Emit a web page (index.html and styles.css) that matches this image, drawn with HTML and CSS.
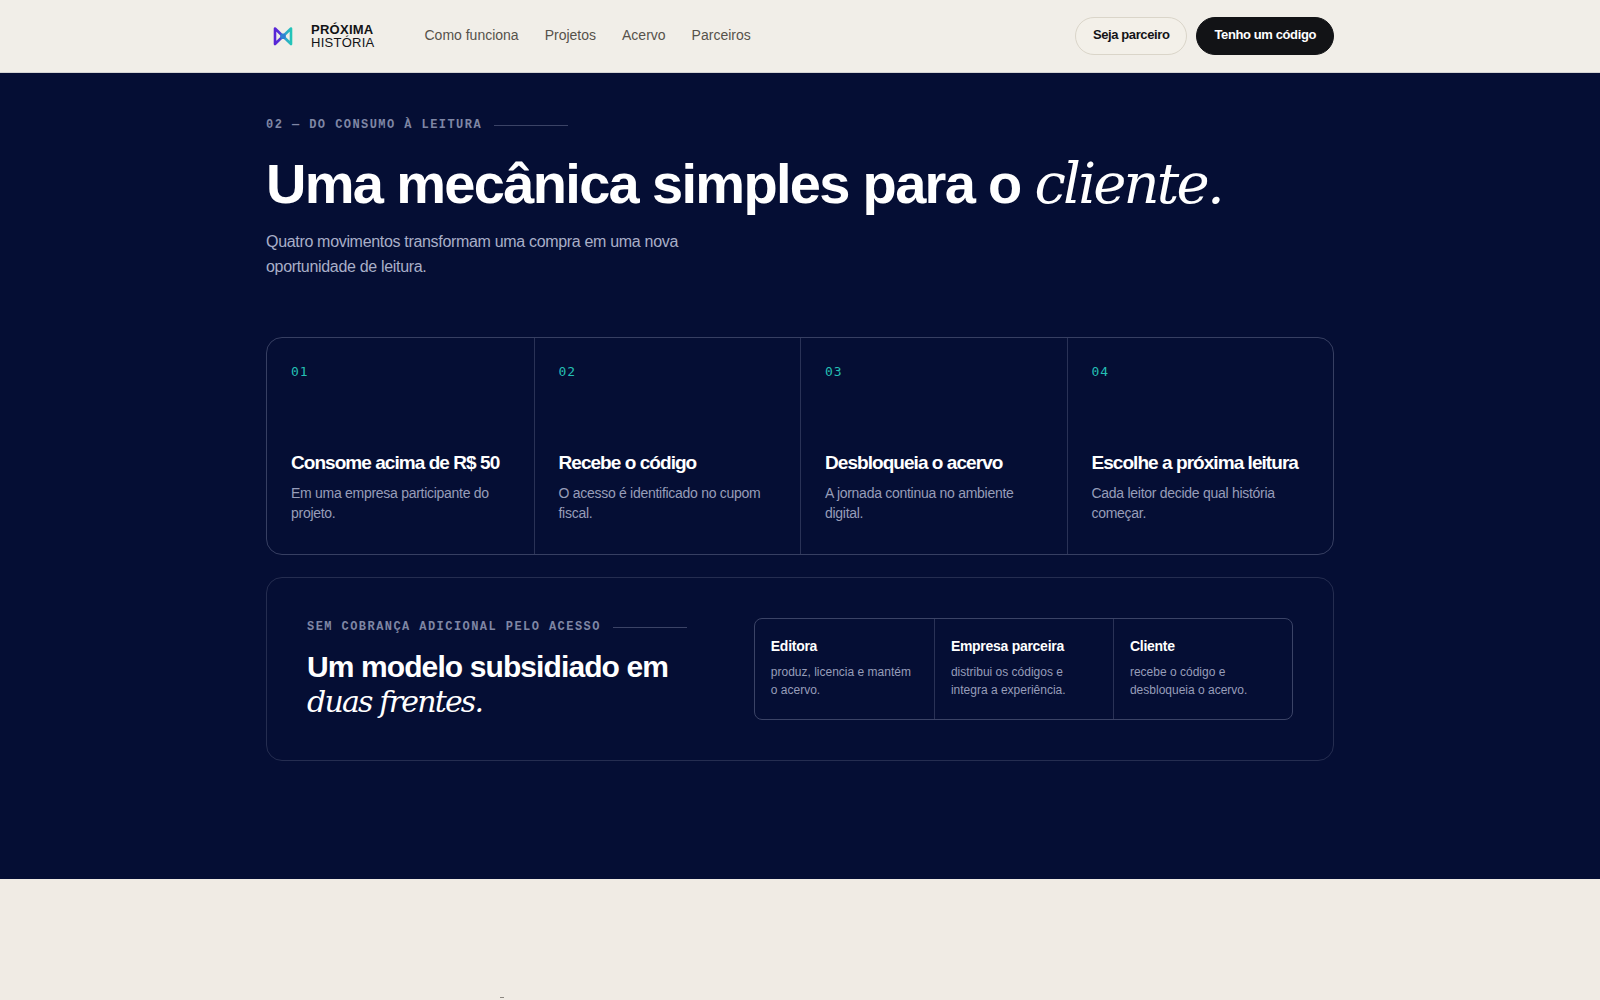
FILE: index.html
```html
<!DOCTYPE html>
<html lang="pt-BR">
<head>
    <meta charset="UTF-8">
    <meta name="viewport" content="width=device-width, initial-scale=1.0">
    <title>Próxima História</title>
    <link rel="stylesheet" href="styles.css">
</head>
<body>
    <header class="header">
        <div class="container header-inner">
            <a class="logo" href="#">
                <svg class="logo-mark" viewBox="0 0 34 34" aria-hidden="true">
                    <defs>
                        <linearGradient id="wing" gradientUnits="userSpaceOnUse" x1="8" x2="26" y1="0" y2="0">
                            <stop offset="0" stop-color="#5a22d6"/>
                            <stop offset="0.3" stop-color="#5530d8"/>
                            <stop offset="0.6" stop-color="#2fa0cc"/>
                            <stop offset="1" stop-color="#22c9b6"/>
                        </linearGradient>
                    </defs>
                    <path d="M9 9.5 L25 25 V9.5 L9 25 Z" fill="none" stroke="url(#wing)" stroke-width="2.6" stroke-linejoin="round"/>
                    <circle cx="17" cy="17.2" r="2.8" fill="#2f7fd4"/>
                </svg>
                <span class="logo-text"><strong>PRÓXIMA</strong><span>HISTÓRIA</span></span>
            </a>
            <nav class="nav">
                <a href="#como">Como funciona</a>
                <a href="#projetos">Projetos</a>
                <a href="#acervo">Acervo</a>
                <a href="#parceiros">Parceiros</a>
            </nav>
            <div class="actions">
                <button class="btn" type="button">Seja parceiro</button>
                <button class="btn btn-dark" type="button">Tenho um código</button>
            </div>
        </div>
    </header>

    <main>
        <section class="how" id="como">
            <div class="container">
                <p class="eyebrow">02 — DO CONSUMO À LEITURA</p>
                <h2 class="title">Uma mecânica simples para o <em>cliente.</em></h2>
                <p class="lead">Quatro movimentos transformam uma compra em uma nova oportunidade de leitura.</p>

                <div class="steps">
                    <article class="step">
                        <span class="step-number">01</span>
                        <h3>Consome acima de R$ 50</h3>
                        <p>Em uma empresa participante do projeto.</p>
                    </article>
                    <article class="step">
                        <span class="step-number">02</span>
                        <h3>Recebe o código</h3>
                        <p>O acesso é identificado no cupom fiscal.</p>
                    </article>
                    <article class="step">
                        <span class="step-number">03</span>
                        <h3>Desbloqueia o acervo</h3>
                        <p>A jornada continua no ambiente digital.</p>
                    </article>
                    <article class="step">
                        <span class="step-number">04</span>
                        <h3>Escolhe a próxima leitura</h3>
                        <p>Cada leitor decide qual história começar.</p>
                    </article>
                </div>

                <div class="model">
                    <div class="model-text">
                        <p class="eyebrow">SEM COBRANÇA ADICIONAL PELO ACESSO</p>
                        <h3 class="model-title">Um modelo subsidiado em <em>duas frentes.</em></h3>
                    </div>
                    <div class="roles">
                        <div class="role">
                            <strong>Editora</strong>
                            <p>produz, licencia e mantém o acervo.</p>
                        </div>
                        <div class="role">
                            <strong>Empresa parceira</strong>
                            <p>distribui os códigos e integra a experiência.</p>
                        </div>
                        <div class="role">
                            <strong>Cliente</strong>
                            <p>recebe o código e desbloqueia o acervo.</p>
                        </div>
                    </div>
                </div>
            </div>
        </section>

        <section class="projects" id="projetos">
            <div class="container">
                <div class="projects-mark"></div>
            </div>
        </section>
    </main>
</body>
</html>
```

FILE: styles.css
```css
* {
    box-sizing: border-box;
}

body {
    margin: 0;
    font-family: "Liberation Sans", Arial, sans-serif;
    background: #f0ebe4;
    color: #121316;
}

h2, h3, p {
    margin: 0;
}

a {
    color: inherit;
    text-decoration: none;
}

.container {
    max-width: 1132px;
    margin: 0 auto;
    padding: 0 32px;
}

/* Header */
.header {
    background: #f1eee8;
    border-bottom: 1px solid #d4d3d3;
}

.header-inner {
    display: flex;
    align-items: center;
    height: 72px;
}

.logo {
    display: flex;
    align-items: center;
    gap: 11px;
    margin-right: 50px;
}

.logo-mark {
    width: 34px;
    height: 34px;
}

.logo-text {
    display: flex;
    flex-direction: column;
    font-size: 13px;
    line-height: 13px;
    letter-spacing: 0.02em;
}

.nav {
    display: flex;
    gap: 26px;
    font-size: 14px;
    line-height: 20px;
    padding-bottom: 3px;
    color: #56524b;
}

.actions {
    display: flex;
    gap: 9px;
    margin-left: auto;
}

.btn {
    font-family: inherit;
    font-size: 13px;
    font-weight: bold;
    line-height: 16px;
    letter-spacing: -0.03em;
    padding: 9px 17px 11px;
    color: #121316;
    background: #f3f0e9;
    border: 1px solid #dad5c9;
    border-radius: 20px;
    cursor: pointer;
}

.btn-dark {
    color: #fff;
    background: #121316;
    border-color: #121316;
}

/* How it works */
.how {
    background: #050e34;
    color: #fff;
    padding: 44px 0 118px;
}

.eyebrow {
    display: flex;
    align-items: center;
    gap: 12px;
    font-family: "Liberation Mono", "Courier New", monospace;
    font-size: 12px;
    font-weight: bold;
    line-height: 16px;
    letter-spacing: 0.12em;
    white-space: nowrap;
    color: #7f86a4;
}

.eyebrow::after {
    content: "";
    width: 74px;
    height: 1px;
    background: #3b4366;
}

em {
    font-family: "DejaVu Serif", serif;
    font-weight: normal;
}

.title {
    margin-top: 20px;
    font-size: 56px;
    line-height: 62px;
    letter-spacing: -0.03em;
}

.title em {
    letter-spacing: -0.05em;
}

.lead {
    max-width: 440px;
    margin-top: 14px;
    font-size: 16px;
    line-height: 25px;
    letter-spacing: -0.02em;
    color: #a9afc8;
}

.steps {
    display: grid;
    grid-template-columns: repeat(4, 1fr);
    margin-top: 58px;
    border: 1px solid #373f62;
    border-radius: 16px;
}

.step {
    display: flex;
    flex-direction: column;
    min-height: 216px;
    padding: 26px 24px 31px;
}

.step + .step,
.role + .role {
    border-left: 1px solid #2a3256;
}

.step-number {
    margin-bottom: auto;
    font-family: "DejaVu Sans Mono", monospace;
    font-size: 13px;
    line-height: 16px;
    letter-spacing: 0.08em;
    color: #24bfb3;
}

.step h3 {
    font-size: 19px;
    line-height: 24px;
    letter-spacing: -0.05em;
}

.step p {
    margin-top: 8px;
    font-size: 14px;
    line-height: 20px;
    letter-spacing: -0.02em;
    color: #979db9;
}

/* Subsidised model */
.model {
    display: grid;
    grid-template-columns: 7fr 10fr;
    gap: 67px;
    align-items: center;
    margin-top: 22px;
    padding: 40px;
    border: 1px solid #252d50;
    border-radius: 16px;
}

.model-title {
    margin-top: 14px;
    font-size: 30px;
    line-height: 35px;
    letter-spacing: -0.03em;
}

.model-title em {
    display: block;
    letter-spacing: -0.06em;
}

.roles {
    display: grid;
    grid-template-columns: repeat(3, 1fr);
    border: 1px solid #3b4366;
    border-radius: 8px;
}

.role {
    padding: 18px 16px 20px;
}

.role strong {
    display: block;
    font-size: 14px;
    line-height: 18px;
    letter-spacing: -0.02em;
}

.role p {
    margin-top: 8px;
    font-size: 12px;
    line-height: 18px;
    color: #979db9;
}

/* Projects */
.projects {
    padding: 118px 0 2px;
}

.projects-mark {
    width: 4px;
    height: 1px;
    margin-left: 234px;
    background: #8b8780;
}
```
